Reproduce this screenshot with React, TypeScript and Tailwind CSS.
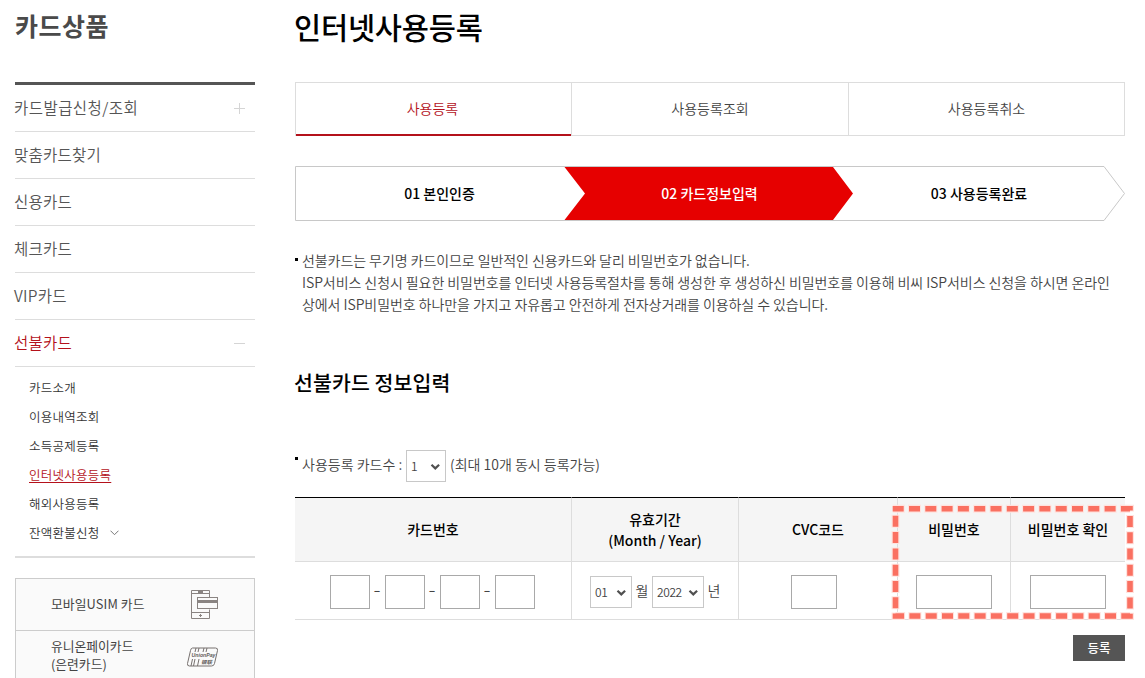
import type { ReactNode } from "react";

const MENU = ["카드발급신청/조회", "맞춤카드찾기", "신용카드", "체크카드", "VIP카드", "선불카드"];
const SUB_MENU = ["카드소개", "이용내역조회", "소득공제등록", "인터넷사용등록", "해외사용등록", "잔액환불신청"];
const TABS = ["사용등록", "사용등록조회", "사용등록취소"];

const Chevron = () => (
  <svg width="11" height="8" viewBox="0 0 11 8" fill="none" className="mt-px shrink-0">
    <path d="M1.5 1.8 5.3 5.4 9.1 1.8" stroke="#505050" strokeWidth="2.2" />
  </svg>
);

const SelectBox = ({ value, className }: { value: string; className: string }) => (
  <button
    type="button"
    className={`flex h-8 items-center justify-between border border-[#c8c8c8] bg-white pr-[4px] pl-[4px] text-[12px] font-[350] text-[#444] ${className}`}
  >
    <span className="mb-px tracking-[-0.4px]">{value}</span>
    <Chevron />
  </button>
);

const InputBox = ({ className }: { className: string }) => (
  <input className={`h-[34px] border border-[#a9a9a9] bg-white ${className}`} />
);

const HeadCell = ({ children, last }: { children: ReactNode; last?: boolean }) => (
  <div
    className={`flex h-[65px] flex-col items-center justify-center border-t border-b border-[#ddd] border-t-black bg-[#f5f5f5] text-center text-[14px] leading-[21px] font-medium text-black ${last ? "" : "border-r"}`}
  >
    {children}
  </div>
);

const BodyCell = ({ children, last, className = "" }: { children: ReactNode; last?: boolean; className?: string }) => (
  <div
    className={`flex h-[58px] items-center justify-center border-b border-[#ddd] pt-[3px] text-[14px] text-[#444] ${last ? "" : "border-r"} ${className}`}
  >
    {children}
  </div>
);

const PhoneIcon = () => (
  <svg width="28" height="30" viewBox="0 0 28 30" fill="none" stroke="#8a8482">
    <path d="M18.5 7V.5H.5v28h18v-9M.5 3.5h18M.5 22.5h18" />
    <path d="M7 2h5" strokeWidth="2" />
    <path d="M9.500 24v3M8 25.500h3" />
    <rect x="6.500" y="7.500" width="20" height="11" fill="#fafafa" />
    <path d="M7 11.500h19" strokeWidth="3" />
  </svg>
);

const UnionPayIcon = () => (
  <svg width="32" height="20" viewBox="0 0 32 20" fill="none" stroke="#77716f" className="overflow-visible">
    <path d="M5.500 1h23q2.500 0 2 2.500l-3 13q-.5 2.500-3 2.500h-22q-2.500 0-2-2.500l3-13q.5-2.500 2-2.500z" />
    <path d="M9 1 8 5M12 1l-1 4M17 1l-1 4M20 1l-1 4M5.500 12 4 19M12 12l-1.500 7M8 12l-1.500 7" />
    <text x="4.500" y="10" fontSize="6" fontWeight="bold" fontStyle="italic" textLength="24" lengthAdjust="spacingAndGlyphs" stroke="none" fill="#625c5a" fontFamily="Liberation Sans, sans-serif">
      UnionPay
    </text>
    <text x="14" y="17" fontSize="5" fontWeight="bold" fontStyle="italic" textLength="11" lengthAdjust="spacingAndGlyphs" stroke="none" fill="#625c5a" fontFamily="Noto Sans CJK SC, sans-serif">
      银联
    </text>
  </svg>
);

const Sidebar = () => (
  <aside className="w-[240px] shrink-0">
    <h2 className="h-[82px] pt-[7px] text-[25px] leading-[37px] font-bold tracking-[0.5px] text-[#4a4a4a]">
      카드상품
    </h2>
    <ul className="border-t-[3px] border-[#555]">
      {MENU.map((item, i) => (
        <li
          key={item}
          className={`flex h-[47px] items-center justify-between border-b border-[#ddd] pr-[10px] text-[15.5px] font-[350] ${i === 0 ? "tracking-[0.45px]" : "tracking-[0.25px]"} ${i === 5 ? "text-[#b4111b]" : "text-[#555]"}`}
        >
          <span className="-ml-px">{item}</span>
          {(i === 0 || i === 5) && (
            <svg width="11" height="11" viewBox="0 0 11 11" stroke="#d5d5d5">
              <path d={i === 0 ? "M0 5.500h11M5.500 0v11" : "M0 5.500h11"} />
            </svg>
          )}
        </li>
      ))}
    </ul>
    <ul className="h-[191px] border-b-2 border-[#ddd] pt-[6px] pl-[14px] text-[12.5px] leading-[29px] font-[350] tracking-[0.25px] text-[#333]">
      {SUB_MENU.map((item, i) => (
        <li key={item} className="flex items-center">
          <span className={i === 3 ? "text-[#b4111b] underline underline-offset-[2px]" : ""}>{item}</span>
          {i === 5 && (
            <svg width="9" height="6" viewBox="0 0 9 6" fill="none" stroke="#777" className="mt-px ml-[10px]">
              <path d="M.5.700 4.500 4.700 8.500.7" />
            </svg>
          )}
        </li>
      ))}
    </ul>
    <div className="mt-[20px] border border-[#ccc] bg-[#fafafa] text-[12.8px] leading-[18px] text-[#444]">
      <div className="flex h-[52px] items-center justify-between border-b border-[#ccc] pr-[35px] pl-[35px]">
        <span className="mb-[2px] tracking-[0.1px]">모바일USIM 카드</span>
        <PhoneIcon />
      </div>
      <div className="flex h-[52px] items-center justify-between pr-[35px] pl-[35px]">
        <span className="mb-[4px]">
          유니온페이카드
          <br />
          (은련카드)
        </span>
        <UnionPayIcon />
      </div>
    </div>
  </aside>
);

const Steps = () => (
  <div className="relative mt-[30px] h-[55px]">
    <svg className="absolute inset-0" width="830" height="55" viewBox="0 0 830 55">
      <path d="M.5.5h808.500L829.500 27.500 809 54.500H.5z" fill="#fff" stroke="#c8c8c8" />
      <path d="M269.500 1H538l20 26.500L538 54H269.500L290 27.500z" fill="#e60000" />
    </svg>
    <ol className="relative flex h-full items-center text-center text-[14px] font-medium text-black">
      <li className="w-[289px]">01 본인인증</li>
      <li className="w-[251px] text-white">02 카드정보입력</li>
      <li className="w-[288px]">03 사용등록완료</li>
    </ol>
  </div>
);

const CardTable = () => (
  <div className="relative mt-[15px]">
    <div className="grid grid-cols-[277px_167px_159px_113px_114px]">
      <HeadCell>카드번호</HeadCell>
      <HeadCell>
        <span>유효기간</span>
        <span>(Month / Year)</span>
      </HeadCell>
      <HeadCell>CVC코드</HeadCell>
      <HeadCell>비밀번호</HeadCell>
      <HeadCell last>비밀번호 확인</HeadCell>
      <BodyCell className="pr-[2px]">
        {[0, 1, 2, 3].map((n) => (
          <span key={n} className="flex items-center">
            {n > 0 && <span className="mb-[8px] w-[15px] text-center text-[21px] leading-5 font-light">-</span>}
            <InputBox className="w-[40px]" />
          </span>
        ))}
      </BodyCell>
      <BodyCell className="pl-[4px]">
        <SelectBox value="01" className="w-[42px]" />
        <span className="mb-[3px] w-[20px] text-center font-[350]">월</span>
        <SelectBox value="2022" className="w-[52px]" />
        <span className="mb-[3px] w-[20px] text-center font-[350]">년</span>
      </BodyCell>
      <BodyCell className="pr-[8px]">
        <InputBox className="w-[46px]" />
      </BodyCell>
      <BodyCell>
        <InputBox className="w-[76px]" />
      </BodyCell>
      <BodyCell last>
        <InputBox className="w-[76px]" />
      </BodyCell>
    </div>
    {/* highlight around the password columns */}
    <svg className="pointer-events-none absolute top-[6px] left-[593px]" width="250" height="122" viewBox="0 0 250 122" fill="none">
      <path d="M4.700 5.700H242V113H7.500V9" stroke="#ffe3df" strokeWidth="8" strokeDasharray="13 3.300" strokeDashoffset="1" />
      <path d="M4.700 5.700H242V113H7.500V9" stroke="#fa7061" strokeWidth="5.600" strokeDasharray="11 5.300" />
    </svg>
  </div>
);

export default function App() {
  return (
    <div className="flex h-[678px] w-[1145px] gap-[40px] overflow-hidden bg-white pl-[15px] font-['Noto_Sans_CJK_KR',sans-serif]">
      <Sidebar />
      <main className="w-[830px] shrink-0">
        <h1 className="-ml-px h-[82px] pt-[4px] text-[29.5px] leading-[44px] font-medium tracking-[-0.2px] text-black">
          인터넷사용등록
        </h1>
        <div className="grid h-[54px] grid-cols-[277px_277px_276px] text-center text-[14px] leading-[50px] font-[350] text-[#444]">
          {TABS.map((tab, i) => (
            <div
              key={tab}
              className={
                i === 0
                  ? "border-t border-r border-l border-[#ddd] text-[#b4111b]"
                  : "border-y border-r border-[#ddd]"
              }
            >
              {i === 0 ? <span className="block h-[53px] border-b-2 border-[#b4111b] pr-[2px]">{tab}</span> : tab}
            </div>
          ))}
        </div>
        <Steps />
        <div className="mt-[28px] flex text-[14px] leading-[22px] font-[350] tracking-[-0.07px] text-[#444]">
          <i className="mt-[9px] mr-[4px] size-[3px] shrink-0 bg-black" />
          <p className="whitespace-nowrap">
            선불카드는 무기명 카드이므로 일반적인 신용카드와 달리 비밀번호가 없습니다.
            <br />
            ISP서비스 신청시 필요한 비밀번호를 인터넷 사용등록절차를 통해 생성한 후 생성하신 비밀번호를 이용해 비씨 ISP서비스 신청을 하시면 온라인
            <br />
            상에서 ISP비밀번호 하나만을 가지고 자유롭고 안전하게 전자상거래를 이용하실 수 있습니다.
          </p>
        </div>
        <h3 className="mt-[52px] -ml-px h-[31px] text-[20.5px] leading-[30px] font-medium tracking-[0.1px] text-black">선불카드 정보입력</h3>
        <div className="mt-[52px] flex h-8 items-center text-[14px] font-[350] text-[#444]">
          <i className="mr-[4px] mb-[15px] size-[3px] bg-black" />
          <span className="mb-[4px] w-[104px]">사용등록 카드수 :</span>
          <SelectBox value="1" className="w-[40px]" />
          <span className="mb-[4px] ml-[4px]">(최대 10개 동시 등록가능)</span>
        </div>
        <CardTable />
        <button type="button" className="mt-[15px] ml-auto block h-[26px] w-[52px] bg-[#555] text-[12.5px] leading-[24px] font-medium text-white">
          등록
        </button>
      </main>
    </div>
  );
}
